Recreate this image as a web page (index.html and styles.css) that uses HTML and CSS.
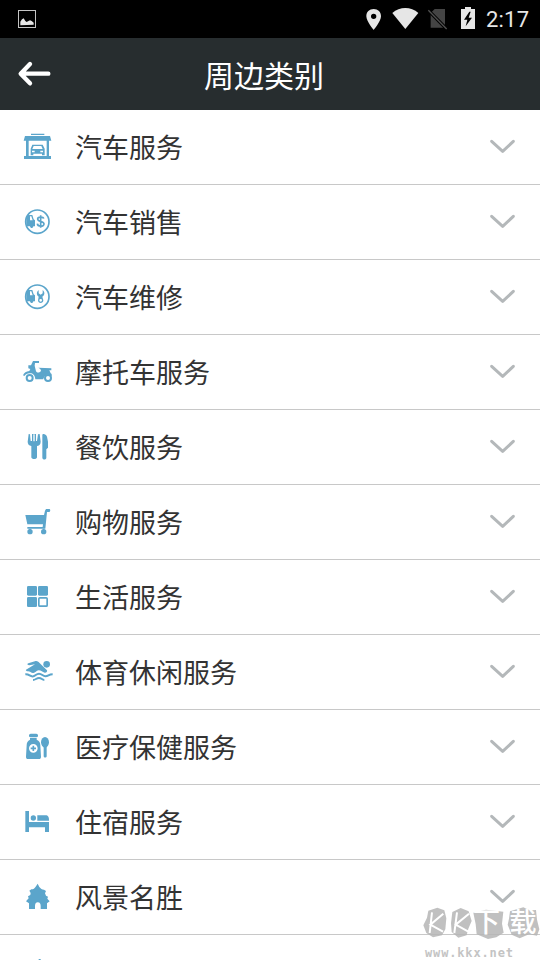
FILE: index.html
```html
<!DOCTYPE html>
<html lang="zh-CN">
<head>
<meta charset="utf-8">
<title>周边类别</title>
<link rel="stylesheet" href="styles.css">
</head>
<body>
<svg class="defs" aria-hidden="true">
  <symbol id="chevron" viewBox="0 0 210 180"><path d="M65 64L98 94L130 64" fill="none" stroke="#b4b8ba" stroke-width="9" stroke-linecap="round" stroke-linejoin="round"/></symbol>
</svg>
<div class="screen">
  <div class="status">
    <svg class="picture" viewBox="0 0 60 60"><rect x="4.5" y="4.5" width="51" height="51" fill="none" stroke="#c4c4c4" stroke-width="3"/><path d="M10 49V38l5-7 5-3 5 8 4 3 4-2 6-3 5 2 6 5v6z" fill="#e6e6e6"/></svg>
    <svg class="indicators" viewBox="0 0 360 114">
      <path fill="#e6e6e6" fill-rule="evenodd" d="M41 27c-13 0-22 9-22 22 0 15 22 41 22 41s22-26 22-41c0-13-9-22-22-22zm0 14a8 8 0 1 1 0 16 8 8 0 0 1 0-16z"/>
      <path fill="#e6e6e6" d="M97 39c22-20 56-20 78 0l-39 48z"/>
      <path fill="#444" d="M224 27h31v56h-43V39z"/>
      <path d="M205 31l55 56" stroke="#000" stroke-width="10"/>
      <path d="M205 31l55 56" stroke="#505050" stroke-width="4"/>
      <path fill="#e6e6e6" d="M315 21h18v6h12v60h-42V27h12z"/>
      <path fill="#000" d="M328 35l-16 24h10l-5 20 19-26h-10l6-18z"/>
    </svg>
    <span class="clock">2:17</span>
  </div>
  <header class="header">
    <svg class="back" viewBox="0 0 108 90"><path d="M39 15L11 44l28 29M14 44h80" fill="none" stroke="#fff" stroke-width="13" stroke-linecap="round" stroke-linejoin="round"/></svg>
    <h1 class="title">周边类别</h1>
  </header>
  <ul class="list">
    <li class="row">
      <svg class="icon" viewBox="0 0 180 180"><path d="M63 41h40v4H63zM45 48h75l4 14h-7v46h6v9H42v-9h6V62h-7zM56 62v46h54V62z" fill-rule="evenodd"/><path fill-rule="evenodd" d="M67 74h31l6 12v20h-8v-5H70v5h-8V86zM71 78l-4 9h31l-4-9zM66 92v5h8v-5zm25 0v5h8v-5z"/></svg>
      <span class="label">汽车服务</span><svg class="arrow"><use href="#chevron"/></svg>
    </li>
    <li class="row">
      <svg class="icon" viewBox="0 0 180 180"><circle class="line" cx="82" cy="80" r="35"/><path fill-rule="evenodd" d="M49 69l4-9h14l4 13 4 3v18h-5c-1 7-9 7-10 0H49zM60 64v12h8l-4-12z"/><path class="line" d="M101 71c-1-6-18-7-18 1 0 10 19 5 19 15 0 9-19 9-20-1M92 61v37"/></svg>
      <span class="label">汽车销售</span><svg class="arrow"><use href="#chevron"/></svg>
    </li>
    <li class="row">
      <svg class="icon" viewBox="0 0 180 180"><circle class="line" cx="82" cy="80" r="35"/><path fill-rule="evenodd" d="M49 69l4-9h14l4 13 4 3v18h-5c-1 7-9 7-10 0H49zM60 64v12h8l-4-12z"/><path fill-rule="evenodd" d="M86 60c-8 7-6 16 0 20l-2 11c0 11 16 11 16 0l-3-11c8-5 8-14 1-20v10l-6 4-6-4zM92 87a4 4 0 1 1 0 8 4 4 0 0 1 0-8z"/></svg>
      <span class="label">汽车维修</span><svg class="arrow"><use href="#chevron"/></svg>
    </li>
    <li class="row">
      <svg class="icon" viewBox="0 0 180 180"><path d="M69 48h18v6H75l-1 8 4 17c3 6 13 4 15-2l-2-5-6-4 39 2v6h-6l4 9 3 2v7l-11-5c-10 0-12 7-14 14H76c-1-14-9-19-17-18-8 0-11 3-16 8l-4-2c4-9 9-12 19-13l3-6-6-2v-9h8z"/><circle class="line thick" cx="59" cy="99" r="9"/><circle class="line thick" cx="114" cy="99" r="9"/></svg>
      <span class="label">摩托车服务</span><svg class="arrow"><use href="#chevron"/></svg>
    </li>
    <li class="row">
      <svg class="icon" viewBox="0 0 180 180"><path d="M56 42l4 1 2 20h4V42h12v21h3l3-20 5-1 3 23c0 9-6 12-11 13v34c0 7-17 7-17 0V78c-7-1-11-6-11-13zM70 43v21h4V43z" fill-rule="evenodd"/><path d="M97 45c0-5 11-4 14 5l3 15v18l-5 5v25c0 7-12 7-12 0z"/></svg>
      <span class="label">餐饮服务</span><svg class="arrow"><use href="#chevron"/></svg>
    </li>
    <li class="row">
      <svg class="icon" viewBox="0 0 180 180"><path d="M46 60h56l3-13 3-5h11c3 2 2 9-1 9h-7l-5 50H52v-5h46l1-8H52z"/><path d="M58 101h4v5h-4zm41 0h4v5h-4z"/><circle cx="60" cy="110" r="8"/><circle cx="101" cy="110" r="8"/></svg>
      <span class="label">购物服务</span><svg class="arrow"><use href="#chevron"/></svg>
    </li>
    <li class="row">
      <svg class="icon" viewBox="0 0 180 180"><rect x="51" y="48" width="30" height="29" rx="4"/><rect x="84" y="48" width="30" height="29" rx="4"/><rect x="51" y="81" width="30" height="30" rx="4"/><rect class="line" x="86.5" y="83.5" width="25" height="25" rx="3"/></svg>
      <span class="label">生活服务</span><svg class="arrow"><use href="#chevron"/></svg>
    </li>
    <li class="row">
      <svg class="icon" viewBox="0 0 180 180"><path d="M55 55l22-7c4-1 8 2 11 5l23 23c2 4-3 8-7 7-7-2-10-7-18-7-8 1-10 9-17 8-6 0-9-5-15-5-4 0-8-3-6-5l27-16-17 3c-6 0-8-4-3-6z"/><circle cx="110" cy="58" r="10"/><path class="line thick" d="M46 88c13-1 13 8 24 6 7-2 9-8 17-8 9 0 11 8 19 8 10 0 9-6 22-6M69 105c8 0 10-6 18-6s9 6 16 6"/></svg>
      <span class="label">体育休闲服务</span><svg class="arrow"><use href="#chevron"/></svg>
    </li>
    <li class="row">
      <svg class="icon" viewBox="0 0 180 180"><rect x="57" y="41" width="27" height="11" rx="5"/><path fill-rule="evenodd" d="M60 54h20v5c8 4 11 9 11 17l2 34c0 5-2 7-6 7H54c-4 0-6-2-6-7l2-34c0-8 3-13 10-17zM70 72a13 13 0 1 0 0 26 13 13 0 0 0 0-26z"/><path class="line" d="M70 77v16M62 85h16"/><ellipse cx="105" cy="67" rx="12" ry="16"/><path d="M101 80h9v29c0 5-9 5-9 0z"/></svg>
      <span class="label">医疗保健服务</span><svg class="arrow"><use href="#chevron"/></svg>
    </li>
    <li class="row">
      <svg class="icon" viewBox="0 0 180 180"><path d="M46 48h11v33h60v30h-12V97H57v14H46z"/><circle cx="70" cy="69" r="8"/><path d="M82 61h25c7 0 10 4 10 16H82z"/></svg>
      <span class="label">住宿服务</span><svg class="arrow"><use href="#chevron"/></svg>
    </li>
    <li class="row">
      <svg class="icon" viewBox="0 0 180 180"><path d="M83 41l5 10c4 5 8 8 14 8l6 4-3 7 3 7 6 3-2 6 7 8-8 6v17H92v-9c0-9-5-11-9-11s-8 3-8 11v9H57v-17l-9-6 8-9-2-6 7-4 1-6-4-7 6-4c6 0 10-3 13-8z"/></svg>
      <span class="label">风景名胜</span><svg class="arrow"><use href="#chevron"/></svg>
    </li>
    <li class="row next">
      <svg class="icon" viewBox="0 0 180 180"><path d="M86 42h6v60h-6z"/></svg>
    </li>
  </ul>
  <div class="watermark">
    <svg class="badge" viewBox="0 0 360 105">
      <g fill="#b5b5b5" fill-opacity=".85"><path d="M25 14l27-9 21 8 6 24-3 33-10 18-27 6-20-13-9-23 11-23z"/><path d="M97 18l25-12 24 10 9 29-10 23-5 20-25 7-20-17-2-26z"/><path d="M160 20l38-9 52 6-4 36 5 27-22 14-25 5-34-14-3-30z"/><path d="M270 16l40-12 19 9 19-1 3 29 7 29-7 19-24-4-28 12-24-11-12-30 4-18z"/></g>
      <g fill="none" stroke="#fff" stroke-width="6"><path d="M36 19l-7 62M70 23L31 56l38 21M111 19l-8 62M147 23l-40 33 38 21"/></g>
      <g class="marktext"><text x="158" y="78" textLength="88">下</text><text x="268" y="78">载</text></g>
    </svg>
    <span class="site">www.kkx.net</span>
  </div>
</div>
</body>
</html>
```
FILE: styles.css
```css
* { box-sizing: border-box; }
body { margin: 0; background: #fff; font-family: "Noto Sans CJK SC", sans-serif; }
.defs { position: absolute; width: 0; height: 0; }
.screen { position: relative; width: 540px; height: 960px; overflow: hidden; background: #fff; }
.status { display: flex; height: 38px; background: #000; color: #e6e6e6; }
.picture { width: 20px; height: 20px; margin: 9px 0 0 17px; }
.indicators { width: 120px; height: 38px; margin-left: 323px; }
.clock { margin-left: 6px; font: 22px/40px Roboto, sans-serif; letter-spacing: .2px; white-space: nowrap; }
.header { display: flex; height: 72px; background: #272d2f; }
.back { width: 36px; height: 30px; margin: 21px 0 0 17px; }
.title { margin: 0 0 0 151px; color: #fff; font-size: 30px; font-weight: 400; line-height: 72px; }
.list { margin: 0; padding: 0; list-style: none; }
.row { display: flex; height: 75px; border-bottom: 1px solid #c8c8c8; }
.icon { width: 60px; height: 60px; margin: 10px 0 0 10px; fill: #5ba5cb; flex: none; }
.line { fill: none; stroke: #5ba5cb; stroke-width: 5; }
.thick { stroke-width: 6; }
.label { margin-left: 5px; color: #333; font-size: 27px; line-height: 74px; white-space: nowrap; }
.arrow { width: 70px; height: 60px; margin: 10px 0 0 auto; flex: none; }
.watermark { position: absolute; left: 420px; top: 906px; width: 120px; height: 54px; }
.badge { display: block; width: 120px; height: 35px; }
.marktext { fill: #fff; font-size: 82px; font-weight: 500; }
.site { display: block; margin: 4px 0 0 5px; color: #c4c4c4; font: bold 12px/16px "DejaVu Sans Mono", monospace; letter-spacing: .85px; }
```
